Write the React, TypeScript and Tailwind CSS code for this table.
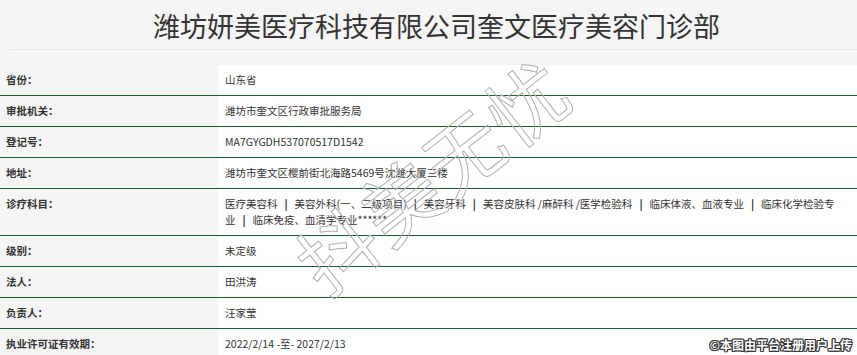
import React from "react";

const Sep = () => <b className="font-bold mx-[7px] text-[#222]">|</b>;

const rows: { label: string; value: React.ReactNode }[] = [
  { label: "省份：", value: "山东省" },
  { label: "审批机关：", value: "潍坊市奎文区行政审批服务局" },
  { label: "登记号：", value: "MA7GYGDH537070517D1542" },
  { label: "地址：", value: "潍坊市奎文区樱前街北海路5469号沈潍大厦三楼" },
  {
    label: "诊疗科目：",
    value: (
      <>
        <span className="block whitespace-nowrap">
          医疗美容科<Sep />美容外科(一、二级项目)<Sep />美容牙科<Sep />美容皮肤科 /麻醉科 /医学检验科<Sep />临床体液、血液专业<Sep />临床化学检验专
        </span>
        <span className="block whitespace-nowrap">
          业<Sep />临床免疫、血清学专业******
        </span>
      </>
    ),
  },
  { label: "级别：", value: "未定级" },
  { label: "法人：", value: "田洪涛" },
  { label: "负责人：", value: "汪家莹" },
  { label: "执业许可证有效期：", value: "2022/2/14 -至- 2027/2/13" },
];

export default function App() {
  return (
    <div
      className="relative w-[857px] h-[355px] overflow-hidden bg-[#f5f5f5] text-[#333]"
      style={{ fontFamily: '"Noto Sans CJK SC", "Noto Sans", sans-serif' }}
    >
      <div className="h-[49px] flex items-center justify-center pl-[16px]">
        <h1 className="text-[27px] leading-[34px] font-normal text-[#333] pt-[2px]">
          潍坊妍美医疗科技有限公司奎文医疗美容门诊部
        </h1>
      </div>
      <div className="ml-[10px] h-px bg-[#e6e6e6]" />
      <div className="h-[15px]" />
      <div className="flex flex-col">
        {rows.map((r, i) => (
          <div key={i} className="flex border-b border-[#17602f]">
            <div className="w-[218px] shrink-0 pl-[6px] py-[7px] text-[10.5px] leading-4 font-bold text-[#333]">
              {r.label}
            </div>
            <div className="flex-1 bg-white pl-[7px] pr-[10px] py-[7px] text-[10.5px] leading-4 text-[#333]">
              {r.value}
            </div>
          </div>
        ))}
      </div>
      <div
        className="pointer-events-none absolute left-[430px] top-[174px] -translate-x-1/2 -translate-y-1/2 -rotate-[38deg] whitespace-nowrap pl-[2px] text-[78px] leading-none tracking-[2px] text-transparent"
        style={{ WebkitTextStroke: "1px #b0b0b0" }}
      >
        抖美无忧
      </div>
      <div
        className="absolute right-[5px] bottom-[2px] text-[12px] leading-4 font-bold text-white"
        style={{
          textShadow:
            "1px 0 0 #333, -1px 0 0 #333, 0 1px 0 #333, 0 -1px 0 #333, 1px 1px 0 #333, -1px -1px 0 #333, 1px -1px 0 #333, -1px 1px 0 #333",
        }}
      >
        ©本图由平台注册用户上传
      </div>
    </div>
  );
}
